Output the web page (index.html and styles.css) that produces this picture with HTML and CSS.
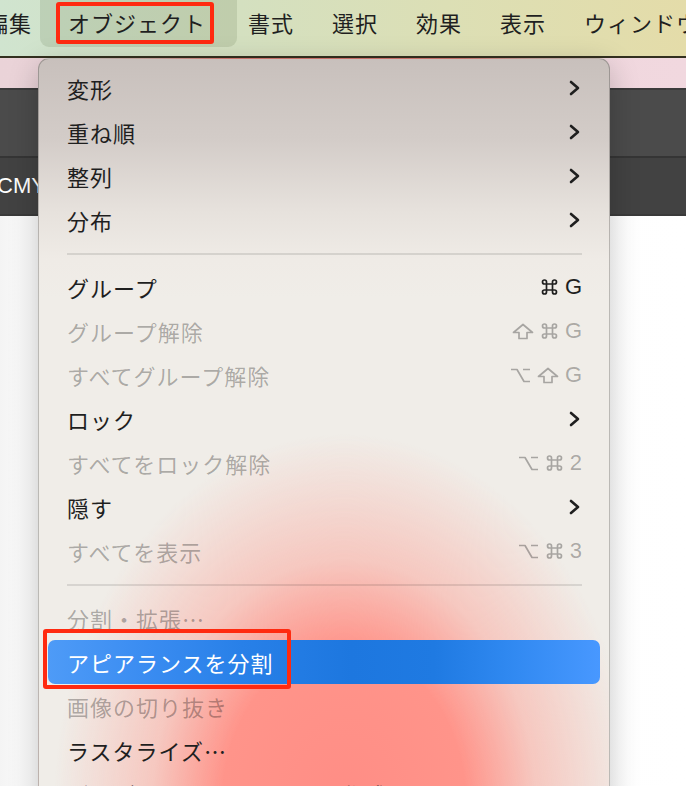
FILE: index.html
```html
<!DOCTYPE html>
<html lang="ja">
<head>
    <meta charset="UTF-8">
    <title>オブジェクト メニュー</title>
    <link rel="stylesheet" href="styles.css">
</head>
<body>
    <div class="menubar">
        <span class="bar-item first">編集</span>
        <span class="bar-item active">オブジェクト<span class="mark bar-mark"></span></span>
        <span class="bar-item">書式</span>
        <span class="bar-item">選択</span>
        <span class="bar-item">効果</span>
        <span class="bar-item">表示</span>
        <span class="bar-item">ウィンドウ</span>
        <span class="bar-item">ヘルプ</span>
    </div>
    <div class="ruler"></div>
    <div class="panel-top"></div>
    <div class="panel-bottom"><span class="mode">CMYK/プレビュー</span></div>
    <div class="canvas"></div>

    <div class="menu">
        <div class="row"><span>変形</span><svg class="chev" width="11" height="16" viewBox="0 0 11 16"><path d="M2 2 L9 8 L2 14"/></svg></div>
        <div class="row"><span>重ね順</span><svg class="chev" width="11" height="16" viewBox="0 0 11 16"><path d="M2 2 L9 8 L2 14"/></svg></div>
        <div class="row"><span>整列</span><svg class="chev" width="11" height="16" viewBox="0 0 11 16"><path d="M2 2 L9 8 L2 14"/></svg></div>
        <div class="row"><span>分布</span><svg class="chev" width="11" height="16" viewBox="0 0 11 16"><path d="M2 2 L9 8 L2 14"/></svg></div>
        <div class="sep"></div>
        <div class="row">
            <span>グループ</span>
            <span class="key">
                <svg class="sym" width="19" height="16" viewBox="0 0 16 16"><path d="M5 5 V3 A2 2 0 1 0 3 5 H13 A2 2 0 1 0 11 3 V13 A2 2 0 1 0 13 11 H3 A2 2 0 1 0 5 13 Z"/></svg>
                <b>G</b>
            </span>
        </div>
        <div class="row off">
            <span>グループ解除</span>
            <span class="key">
                <svg class="sym" width="22" height="17" viewBox="0 0 22 17"><path d="M11 1.5 L20.5 9.5 H15 V15.5 H7 V9.5 H1.5 Z"/></svg>
                <svg class="sym" width="19" height="16" viewBox="0 0 16 16"><path d="M5 5 V3 A2 2 0 1 0 3 5 H13 A2 2 0 1 0 11 3 V13 A2 2 0 1 0 13 11 H3 A2 2 0 1 0 5 13 Z"/></svg>
                <b>G</b>
            </span>
        </div>
        <div class="row off">
            <span>すべてグループ解除</span>
            <span class="key">
                <svg class="sym" width="21" height="15" viewBox="0 0 21 15"><path d="M1 1.5 H7 L14 13.5 H20 M13 1.5 H20"/></svg>
                <svg class="sym" width="22" height="17" viewBox="0 0 22 17"><path d="M11 1.5 L20.5 9.5 H15 V15.5 H7 V9.5 H1.5 Z"/></svg>
                <b>G</b>
            </span>
        </div>
        <div class="row"><span>ロック</span><svg class="chev" width="11" height="16" viewBox="0 0 11 16"><path d="M2 2 L9 8 L2 14"/></svg></div>
        <div class="row off">
            <span>すべてをロック解除</span>
            <span class="key">
                <svg class="sym" width="21" height="15" viewBox="0 0 21 15"><path d="M1 1.5 H7 L14 13.5 H20 M13 1.5 H20"/></svg>
                <svg class="sym" width="19" height="16" viewBox="0 0 16 16"><path d="M5 5 V3 A2 2 0 1 0 3 5 H13 A2 2 0 1 0 11 3 V13 A2 2 0 1 0 13 11 H3 A2 2 0 1 0 5 13 Z"/></svg>
                <b>2</b>
            </span>
        </div>
        <div class="row"><span>隠す</span><svg class="chev" width="11" height="16" viewBox="0 0 11 16"><path d="M2 2 L9 8 L2 14"/></svg></div>
        <div class="row off">
            <span>すべてを表示</span>
            <span class="key">
                <svg class="sym" width="21" height="15" viewBox="0 0 21 15"><path d="M1 1.5 H7 L14 13.5 H20 M13 1.5 H20"/></svg>
                <svg class="sym" width="19" height="16" viewBox="0 0 16 16"><path d="M5 5 V3 A2 2 0 1 0 3 5 H13 A2 2 0 1 0 11 3 V13 A2 2 0 1 0 13 11 H3 A2 2 0 1 0 5 13 Z"/></svg>
                <b>3</b>
            </span>
        </div>
        <div class="sep"></div>
        <div class="row off"><span>分割・拡張…</span></div>
        <div class="row selected"><span>アピアランスを分割</span><span class="mark row-mark"></span></div>
        <div class="row off"><span>画像の切り抜き</span></div>
        <div class="row"><span>ラスタライズ…</span></div>
        <div class="row"><span>グラデーションメッシュを作成…</span></div>
        <div class="row"><span>オブジェクトのモザイク…</span></div>
    </div>
</body>
</html>
```

FILE: styles.css
```css
body {
    margin: 0;
    width: 686px;
    height: 786px;
    overflow: hidden;
    position: relative;
    background: #fff;
    font-family: "Noto Sans CJK JP", "DejaVu Sans", sans-serif;
    color: #1f1f1f;
}
.menubar {
    height: 56px;
    display: flex;
    align-items: flex-start;
    white-space: nowrap;
    background: linear-gradient(90deg, #d0e4cf 0%, #d4e0c0 35%, #dcdfb5 65%, #e4dca9 100%);
    border-bottom: 2px solid #33301f;
    font-size: 22px;
    letter-spacing: 1px;
}
.bar-item {
    height: 44px;
    line-height: 44px;
    padding: 0 19px;
    flex: none;
}
.bar-item.first {
    margin-left: -33px;
}
.bar-item.active {
    position: relative;
    height: 47px;
    margin: 0 -8px 0 -11px;
    padding: 0 31px 0 28px;
    background: rgba(70, 95, 50, 0.14);
    border-radius: 0 0 9px 9px;
}
.ruler {
    height: 30px;
    background: linear-gradient(90deg, #ead3d8, #f1d8df);
}
.panel-top {
    height: 66px;
    background: #4b4b4b;
    border-top: 2px solid #3b3b3b;
}
.panel-bottom {
    height: 56px;
    background: #424242;
    border-top: 2px solid #353535;
    border-bottom: 2px solid #3a3a3a;
    color: #fff;
    font-family: "Liberation Sans", "Noto Sans CJK JP", sans-serif;
    font-size: 22px;
    line-height: 56px;
}
.mode {
    margin-left: -3px;
}
.canvas {
    height: 580px;
    background: linear-gradient(90deg, #f4f4f4, #fbfbfb 30px, #fff);
}
.menu {
    position: absolute;
    left: 38px;
    top: 58px;
    width: 572px;
    height: 800px;
    box-sizing: border-box;
    padding: 7px 9px;
    border: 1px solid rgba(0, 0, 0, 0.22);
    border-radius: 11px;
    box-shadow: 0 8px 30px rgba(0, 0, 0, 0.22);
    background:
        radial-gradient(ellipse 290px 370px at 305px 745px, #ff8d85 0%, #ff948a 42%, rgba(250, 175, 165, 0.6) 66%, rgba(240, 236, 230, 0) 100%),
        linear-gradient(180deg, #c8c0bc 0px, #d3ccc8 80px, #e6e1dc 150px, #efebe6 200px, #f0ede8 240px);
    font-size: 22px;
    letter-spacing: 1px;
    white-space: nowrap;
}
.row {
    height: 44px;
    display: flex;
    align-items: center;
    justify-content: space-between;
    padding: 0 18px 0 19px;
    position: relative;
}
.row.off {
    color: rgba(0, 0, 0, 0.3);
}
.row.selected {
    color: #fff;
    border-radius: 7px;
    background: linear-gradient(90deg, #4e9bf7 0%, #3a8cf1 18%, #2880e8 35%, #1d77df 55%, #1f7ae2 70%, #2f88f0 83%, #4898ff 100%);
}
.key {
    display: flex;
    align-items: center;
    gap: 6px;
    letter-spacing: 0;
}
.key b {
    font-family: "Liberation Sans", sans-serif;
    font-weight: normal;
    font-size: 22px;
}
.sym {
    fill: none;
    stroke: currentColor;
    stroke-width: 1.7;
    stroke-linejoin: round;
}
.chev {
    margin-right: 2px;
    fill: none;
    stroke: #1f1f1f;
    stroke-width: 2.6;
    stroke-linecap: round;
    stroke-linejoin: round;
}
.sep {
    height: 23px;
    display: flex;
    align-items: center;
    padding: 0 18px 0 19px;
}
.sep::after {
    content: "";
    flex: 1;
    height: 2px;
    background: rgba(0, 0, 0, 0.1);
}
.mark {
    position: absolute;
    border: 4px solid #ff2a10;
    border-radius: 3px;
}
.bar-mark {
    left: 16px;
    top: 2px;
    width: 150px;
    height: 34px;
}
.row-mark {
    left: -5px;
    top: -11px;
    width: 240px;
    height: 52px;
}
```
